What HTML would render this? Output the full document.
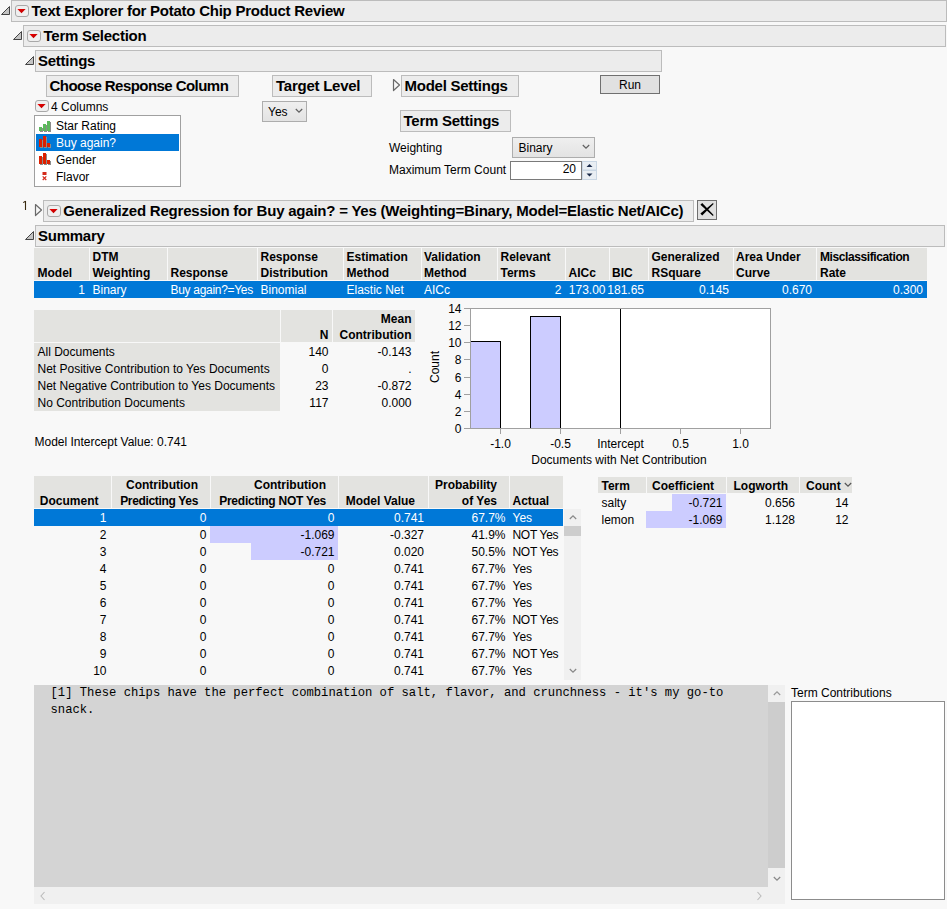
<!DOCTYPE html><html><head><meta charset="utf-8"><style>
html,body{margin:0;padding:0;}
body{width:947px;height:909px;background:#f8f8f8;position:relative;overflow:hidden;font-family:'Liberation Sans', sans-serif;}
.b{position:absolute;box-sizing:border-box;}
.t{position:absolute;white-space:pre;}
</style></head><body>
<div class="b" style="left:11px;top:0px;width:936px;height:22px;background:#ececec;border:1px solid #bcbcbc;"></div>
<svg class="b" style="left:0px;top:5px" width="11" height="11" viewBox="0 0 11 11"><path d="M1.5 9.5 L9.5 1.5 L9.5 9.5 Z" fill="#c4c4c4" stroke="#444" stroke-width="1" stroke-linejoin="round"/></svg>
<svg class="b" style="left:15px;top:5px" width="14" height="12" viewBox="0 0 14 12"><rect x="0.5" y="0.5" width="13" height="11" rx="2.5" fill="#efefef" stroke="#a8a8a8"/><defs><linearGradient id="rg15_5" x1="0" y1="0" x2="1" y2="1"><stop offset="0" stop-color="#f00000"/><stop offset="1" stop-color="#b00000"/></linearGradient></defs><path d="M2.4 4 L10.6 4 L6.5 8.3 Z" fill="url(#rg15_5)"/></svg>
<div class="t" style="top:1px;font:bold 15px/20px 'Liberation Sans', sans-serif;color:#000;letter-spacing:-0.25px;left:31.5px;">Text Explorer for Potato Chip Product Review</div>
<div class="b" style="left:23px;top:25px;width:923px;height:22px;background:#ececec;border:1px solid #bcbcbc;"></div>
<svg class="b" style="left:12px;top:30px" width="11" height="11" viewBox="0 0 11 11"><path d="M1.5 9.5 L9.5 1.5 L9.5 9.5 Z" fill="#c4c4c4" stroke="#444" stroke-width="1" stroke-linejoin="round"/></svg>
<svg class="b" style="left:27px;top:30px" width="14" height="12" viewBox="0 0 14 12"><rect x="0.5" y="0.5" width="13" height="11" rx="2.5" fill="#efefef" stroke="#a8a8a8"/><defs><linearGradient id="rg27_30" x1="0" y1="0" x2="1" y2="1"><stop offset="0" stop-color="#f00000"/><stop offset="1" stop-color="#b00000"/></linearGradient></defs><path d="M2.4 4 L10.6 4 L6.5 8.3 Z" fill="url(#rg27_30)"/></svg>
<div class="t" style="top:26px;font:bold 15px/20px 'Liberation Sans', sans-serif;color:#000;letter-spacing:-0.25px;left:43.5px;">Term Selection</div>
<div class="b" style="left:35px;top:50px;width:627px;height:22px;background:#ececec;border:1px solid #bcbcbc;"></div>
<svg class="b" style="left:24px;top:55px" width="11" height="11" viewBox="0 0 11 11"><path d="M1.5 9.5 L9.5 1.5 L9.5 9.5 Z" fill="#c4c4c4" stroke="#444" stroke-width="1" stroke-linejoin="round"/></svg>
<div class="t" style="top:51px;font:bold 15px/20px 'Liberation Sans', sans-serif;color:#000;letter-spacing:-0.25px;left:38px;">Settings</div>
<div class="b" style="left:46px;top:75px;width:193px;height:22px;background:#ececec;border:1px solid #bcbcbc;"></div>
<div class="t" style="top:76px;font:bold 15px/20px 'Liberation Sans', sans-serif;color:#000;letter-spacing:-0.55px;left:49.5px;">Choose Response Column</div>
<div class="b" style="left:272px;top:75px;width:100px;height:22px;background:#ececec;border:1px solid #bcbcbc;"></div>
<div class="t" style="top:76px;font:bold 15px/20px 'Liberation Sans', sans-serif;color:#000;letter-spacing:-0.25px;left:276px;">Target Level</div>
<div class="b" style="left:401px;top:75px;width:118px;height:22px;background:#ececec;border:1px solid #bcbcbc;"></div>
<svg class="b" style="left:392px;top:78px" width="9" height="14" viewBox="0 0 9 14"><path d="M1.5 1.5 L7.5 7 L1.5 12.5 Z" fill="#f8f8f8" stroke="#6a6a6a" stroke-width="1.2" stroke-linejoin="round"/></svg>
<div class="t" style="top:76px;font:bold 15px/20px 'Liberation Sans', sans-serif;color:#000;letter-spacing:-0.25px;left:404.5px;">Model Settings</div>
<div class="b" style="left:600px;top:75px;width:60px;height:19px;background:#e1e1e1;border:1px solid #707070;"></div>
<div class="t" style="top:75px;font:12px/20px 'Liberation Sans', sans-serif;color:#000;left:330px;width:600px;text-align:center;">Run</div>
<svg class="b" style="left:35px;top:100px" width="14" height="12" viewBox="0 0 14 12"><rect x="0.5" y="0.5" width="13" height="11" rx="2.5" fill="#efefef" stroke="#a8a8a8"/><defs><linearGradient id="rg35_100" x1="0" y1="0" x2="1" y2="1"><stop offset="0" stop-color="#f00000"/><stop offset="1" stop-color="#b00000"/></linearGradient></defs><path d="M2.4 4 L10.6 4 L6.5 8.3 Z" fill="url(#rg35_100)"/></svg>
<div class="t" style="top:97px;font:12px/20px 'Liberation Sans', sans-serif;color:#000;left:51px;">4 Columns</div>
<div class="b" style="left:34px;top:115px;width:147px;height:72px;background:#ffffff;border:1px solid #a0a0a0;"></div>
<div class="b" style="left:36px;top:134px;width:143px;height:17px;background:#0078d7;"></div>
<div class="b" style="left:40px;top:128px;width:3px;height:4px;background:#8c8c8c;"></div>
<div class="b" style="left:39px;top:127px;width:3px;height:4px;background:#5cb85c;"></div>
<div class="b" style="left:44px;top:125px;width:3px;height:7px;background:#8c8c8c;"></div>
<div class="b" style="left:43px;top:124px;width:3px;height:7px;background:#5cb85c;"></div>
<div class="b" style="left:48px;top:122px;width:3px;height:10px;background:#8c8c8c;"></div>
<div class="b" style="left:47px;top:121px;width:3px;height:10px;background:#5cb85c;"></div>
<div class="b" style="left:40px;top:140px;width:3px;height:8px;background:#8c8c8c;"></div>
<div class="b" style="left:39px;top:139px;width:3px;height:8px;background:#dd2000;"></div>
<div class="b" style="left:44px;top:137px;width:3px;height:11px;background:#8c8c8c;"></div>
<div class="b" style="left:43px;top:136px;width:3px;height:11px;background:#dd2000;"></div>
<div class="b" style="left:48px;top:144px;width:3px;height:4px;background:#8c8c8c;"></div>
<div class="b" style="left:47px;top:143px;width:3px;height:4px;background:#dd2000;"></div>
<div class="b" style="left:40px;top:157px;width:3px;height:8px;background:#8c8c8c;"></div>
<div class="b" style="left:39px;top:156px;width:3px;height:8px;background:#dd2000;"></div>
<div class="b" style="left:44px;top:154px;width:3px;height:11px;background:#8c8c8c;"></div>
<div class="b" style="left:43px;top:153px;width:3px;height:11px;background:#dd2000;"></div>
<div class="b" style="left:48px;top:161px;width:3px;height:4px;background:#8c8c8c;"></div>
<div class="b" style="left:47px;top:160px;width:3px;height:4px;background:#dd2000;"></div>
<svg class="b" style="left:42px;top:172px" width="5" height="9" viewBox="0 0 5 9"><rect x="0.5" y="0" width="4" height="3" fill="#d42a1a"/><path d="M0.7 4.3 L4.3 8 M4.3 4.3 L0.7 8" stroke="#d42a1a" stroke-width="1.2"/></svg>
<div class="t" style="top:116px;font:12px/20px 'Liberation Sans', sans-serif;color:#000;left:56px;">Star Rating</div>
<div class="t" style="top:133px;font:12px/20px 'Liberation Sans', sans-serif;color:#fff;left:56px;">Buy again?</div>
<div class="t" style="top:150px;font:12px/20px 'Liberation Sans', sans-serif;color:#000;left:56px;">Gender</div>
<div class="t" style="top:167px;font:12px/20px 'Liberation Sans', sans-serif;color:#000;left:56px;">Flavor</div>
<div class="b" style="left:262px;top:101px;width:45px;height:21px;background:linear-gradient(#efefef,#e3e3e3);border:1px solid #adadad;"></div>
<div class="t" style="top:102px;font:12px/20px 'Liberation Sans', sans-serif;color:#000;left:268px;">Yes</div>
<svg class="b" style="left:295px;top:108px" width="8" height="6" viewBox="0 0 8 6"><path d="M0.8 1 L4 4.2 L7.2 1" fill="none" stroke="#606060" stroke-width="1.2"/></svg>
<div class="b" style="left:400px;top:110px;width:111px;height:22px;background:#ececec;border:1px solid #bcbcbc;"></div>
<div class="t" style="top:111px;font:bold 15px/20px 'Liberation Sans', sans-serif;color:#000;letter-spacing:-0.25px;left:403.5px;">Term Settings</div>
<div class="t" style="top:138px;font:12px/20px 'Liberation Sans', sans-serif;color:#000;left:389px;">Weighting</div>
<div class="t" style="top:160px;font:12px/20px 'Liberation Sans', sans-serif;color:#000;left:389px;">Maximum Term Count</div>
<div class="b" style="left:512px;top:137px;width:83px;height:21px;background:linear-gradient(#efefef,#e3e3e3);border:1px solid #adadad;"></div>
<div class="t" style="top:138px;font:12px/20px 'Liberation Sans', sans-serif;color:#000;left:518.5px;">Binary</div>
<svg class="b" style="left:582px;top:144px" width="8" height="6" viewBox="0 0 8 6"><path d="M0.8 1 L4 4.2 L7.2 1" fill="none" stroke="#606060" stroke-width="1.2"/></svg>
<div class="b" style="left:510px;top:161px;width:72px;height:19px;background:#ffffff;border:1px solid #7a7a7a;"></div>
<div class="t" style="top:159px;font:12px/20px 'Liberation Sans', sans-serif;color:#000;left:-24px;width:600px;text-align:right;">20</div>
<svg class="b" style="left:582px;top:161px" width="15" height="19" viewBox="0 0 15 19"><rect x="0.5" y="0.5" width="14" height="8.5" fill="#e9eef3" stroke="#c9d6e3"/><rect x="0.5" y="9.5" width="14" height="9" fill="#e9eef3" stroke="#c9d6e3"/><path d="M4.5 6 L10.5 6 L7.5 3 Z" fill="#1a2a4a"/><path d="M4.5 12.5 L10.5 12.5 L7.5 15.5 Z" fill="#1a2a4a"/></svg>
<svg class="b" style="left:22px;top:200px" width="8" height="11" viewBox="0 0 8 11"><path d="M3.5 1 L3.5 10 M1.2 2.6 L3.5 1.2" fill="none" stroke="#3a2a10" stroke-width="1.1"/></svg>
<svg class="b" style="left:34px;top:203px" width="9" height="14" viewBox="0 0 9 14"><path d="M1.5 1.5 L7.5 7 L1.5 12.5 Z" fill="#f8f8f8" stroke="#6a6a6a" stroke-width="1.2" stroke-linejoin="round"/></svg>
<div class="b" style="left:43px;top:200px;width:651px;height:22px;background:#ececec;border:1px solid #bcbcbc;"></div>
<svg class="b" style="left:47px;top:205px" width="14" height="12" viewBox="0 0 14 12"><rect x="0.5" y="0.5" width="13" height="11" rx="2.5" fill="#efefef" stroke="#a8a8a8"/><defs><linearGradient id="rg47_205" x1="0" y1="0" x2="1" y2="1"><stop offset="0" stop-color="#f00000"/><stop offset="1" stop-color="#b00000"/></linearGradient></defs><path d="M2.4 4 L10.6 4 L6.5 8.3 Z" fill="url(#rg47_205)"/></svg>
<div class="t" style="top:201px;font:bold 15px/20px 'Liberation Sans', sans-serif;color:#000;letter-spacing:-0.22px;left:63.3px;">Generalized Regression for Buy again? = Yes (Weighting=Binary, Model=Elastic Net/AICc)</div>
<svg class="b" style="left:697px;top:200px" width="20" height="20" viewBox="0 0 20 20"><rect x="0.5" y="0.5" width="19" height="19" fill="#e0e0e0" stroke="#6e6e6e"/><path d="M3.4 4.7 L5.2 2.9 L16.6 15.1 L15.9 15.9 Z M16 3.1 L16.6 3.9 L5.2 15.5 L3.4 13.5 Z" fill="#000"/></svg>
<div class="b" style="left:35px;top:225px;width:910px;height:22px;background:#ececec;border:1px solid #bcbcbc;"></div>
<svg class="b" style="left:24px;top:230px" width="11" height="11" viewBox="0 0 11 11"><path d="M1.5 9.5 L9.5 1.5 L9.5 9.5 Z" fill="#c4c4c4" stroke="#444" stroke-width="1" stroke-linejoin="round"/></svg>
<div class="t" style="top:226px;font:bold 15px/20px 'Liberation Sans', sans-serif;color:#000;letter-spacing:-0.25px;left:38px;">Summary</div>
<div class="b" style="left:34px;top:248px;width:55px;height:32px;background:#e3e3e0;"></div>
<div class="b" style="left:90px;top:248px;width:77px;height:32px;background:#e3e3e0;"></div>
<div class="b" style="left:168px;top:248px;width:89px;height:32px;background:#e3e3e0;"></div>
<div class="b" style="left:258px;top:248px;width:85px;height:32px;background:#e3e3e0;"></div>
<div class="b" style="left:344px;top:248px;width:77px;height:32px;background:#e3e3e0;"></div>
<div class="b" style="left:422px;top:248px;width:75px;height:32px;background:#e3e3e0;"></div>
<div class="b" style="left:498px;top:248px;width:67px;height:32px;background:#e3e3e0;"></div>
<div class="b" style="left:566px;top:248px;width:43px;height:32px;background:#e3e3e0;"></div>
<div class="b" style="left:610px;top:248px;width:38px;height:32px;background:#e3e3e0;"></div>
<div class="b" style="left:649px;top:248px;width:84px;height:32px;background:#e3e3e0;"></div>
<div class="b" style="left:734px;top:248px;width:82px;height:32px;background:#e3e3e0;"></div>
<div class="b" style="left:817px;top:248px;width:110px;height:32px;background:#e3e3e0;"></div>
<div class="b" style="left:34px;top:281px;width:893px;height:17px;background:#0078d7;"></div>
<div class="t" style="top:263px;font:bold 12px/20px 'Liberation Sans', sans-serif;color:#000;left:37.5px;">Model</div>
<div class="t" style="top:247px;font:bold 12px/20px 'Liberation Sans', sans-serif;color:#000;left:92.5px;">DTM</div>
<div class="t" style="top:263px;font:bold 12px/20px 'Liberation Sans', sans-serif;color:#000;left:92.5px;">Weighting</div>
<div class="t" style="top:263px;font:bold 12px/20px 'Liberation Sans', sans-serif;color:#000;left:170.5px;">Response</div>
<div class="t" style="top:247px;font:bold 12px/20px 'Liberation Sans', sans-serif;color:#000;left:260.5px;">Response</div>
<div class="t" style="top:263px;font:bold 12px/20px 'Liberation Sans', sans-serif;color:#000;left:260.5px;">Distribution</div>
<div class="t" style="top:247px;font:bold 12px/20px 'Liberation Sans', sans-serif;color:#000;left:346.5px;">Estimation</div>
<div class="t" style="top:263px;font:bold 12px/20px 'Liberation Sans', sans-serif;color:#000;left:346.5px;">Method</div>
<div class="t" style="top:247px;font:bold 12px/20px 'Liberation Sans', sans-serif;color:#000;left:424px;">Validation</div>
<div class="t" style="top:263px;font:bold 12px/20px 'Liberation Sans', sans-serif;color:#000;left:424px;">Method</div>
<div class="t" style="top:247px;font:bold 12px/20px 'Liberation Sans', sans-serif;color:#000;left:500.5px;">Relevant</div>
<div class="t" style="top:263px;font:bold 12px/20px 'Liberation Sans', sans-serif;color:#000;left:500.5px;">Terms</div>
<div class="t" style="top:263px;font:bold 12px/20px 'Liberation Sans', sans-serif;color:#000;left:568.5px;">AICc</div>
<div class="t" style="top:263px;font:bold 12px/20px 'Liberation Sans', sans-serif;color:#000;left:612px;">BIC</div>
<div class="t" style="top:247px;font:bold 12px/20px 'Liberation Sans', sans-serif;color:#000;left:651.5px;">Generalized</div>
<div class="t" style="top:263px;font:bold 12px/20px 'Liberation Sans', sans-serif;color:#000;left:651.5px;">RSquare</div>
<div class="t" style="top:247px;font:bold 12px/20px 'Liberation Sans', sans-serif;color:#000;left:736px;">Area Under</div>
<div class="t" style="top:263px;font:bold 12px/20px 'Liberation Sans', sans-serif;color:#000;left:736px;">Curve</div>
<div class="t" style="top:247px;font:bold 12px/20px 'Liberation Sans', sans-serif;color:#000;letter-spacing:-0.4px;left:820px;">Misclassification</div>
<div class="t" style="top:263px;font:bold 12px/20px 'Liberation Sans', sans-serif;color:#000;left:820px;">Rate</div>
<div class="t" style="top:280px;font:12px/20px 'Liberation Sans', sans-serif;color:#fff;left:-515px;width:600px;text-align:right;">1</div>
<div class="t" style="top:280px;font:12px/20px 'Liberation Sans', sans-serif;color:#fff;left:92.5px;">Binary</div>
<div class="t" style="top:280px;font:12px/20px 'Liberation Sans', sans-serif;color:#fff;letter-spacing:-0.3px;left:170.5px;">Buy again?=Yes</div>
<div class="t" style="top:280px;font:12px/20px 'Liberation Sans', sans-serif;color:#fff;left:260.5px;">Binomial</div>
<div class="t" style="top:280px;font:12px/20px 'Liberation Sans', sans-serif;color:#fff;left:346.5px;">Elastic Net</div>
<div class="t" style="top:280px;font:12px/20px 'Liberation Sans', sans-serif;color:#fff;left:424px;">AICc</div>
<div class="t" style="top:280px;font:12px/20px 'Liberation Sans', sans-serif;color:#fff;left:-38.5px;width:600px;text-align:right;">2</div>
<div class="t" style="top:280px;font:12px/20px 'Liberation Sans', sans-serif;color:#fff;left:5.5px;width:600px;text-align:right;">173.00</div>
<div class="t" style="top:280px;font:12px/20px 'Liberation Sans', sans-serif;color:#fff;left:44px;width:600px;text-align:right;">181.65</div>
<div class="t" style="top:280px;font:12px/20px 'Liberation Sans', sans-serif;color:#fff;left:129px;width:600px;text-align:right;">0.145</div>
<div class="t" style="top:280px;font:12px/20px 'Liberation Sans', sans-serif;color:#fff;left:212px;width:600px;text-align:right;">0.670</div>
<div class="t" style="top:280px;font:12px/20px 'Liberation Sans', sans-serif;color:#fff;left:323px;width:600px;text-align:right;">0.300</div>
<div class="b" style="left:34px;top:310px;width:246px;height:32px;background:#e3e3e0;"></div>
<div class="b" style="left:281px;top:310px;width:51px;height:32px;background:#e3e3e0;"></div>
<div class="b" style="left:333px;top:310px;width:82px;height:32px;background:#e3e3e0;"></div>
<div class="b" style="left:34px;top:343px;width:246px;height:68px;background:#e3e3e0;"></div>
<div class="t" style="top:325px;font:bold 12px/20px 'Liberation Sans', sans-serif;color:#000;left:-271.5px;width:600px;text-align:right;">N</div>
<div class="t" style="top:309px;font:bold 12px/20px 'Liberation Sans', sans-serif;color:#000;left:-188.5px;width:600px;text-align:right;">Mean</div>
<div class="t" style="top:325px;font:bold 12px/20px 'Liberation Sans', sans-serif;color:#000;left:-188.5px;width:600px;text-align:right;">Contribution</div>
<div class="t" style="top:342px;font:12px/20px 'Liberation Sans', sans-serif;color:#000;left:37.5px;">All Documents</div>
<div class="t" style="top:342px;font:12px/20px 'Liberation Sans', sans-serif;color:#000;left:-271.5px;width:600px;text-align:right;">140</div>
<div class="t" style="top:342px;font:12px/20px 'Liberation Sans', sans-serif;color:#000;left:-188.5px;width:600px;text-align:right;">-0.143</div>
<div class="t" style="top:359px;font:12px/20px 'Liberation Sans', sans-serif;color:#000;left:37.5px;">Net Positive Contribution to Yes Documents</div>
<div class="t" style="top:359px;font:12px/20px 'Liberation Sans', sans-serif;color:#000;left:-271.5px;width:600px;text-align:right;">0</div>
<div class="t" style="top:359px;font:12px/20px 'Liberation Sans', sans-serif;color:#000;left:-188.5px;width:600px;text-align:right;">.</div>
<div class="t" style="top:376px;font:12px/20px 'Liberation Sans', sans-serif;color:#000;left:37.5px;">Net Negative Contribution to Yes Documents</div>
<div class="t" style="top:376px;font:12px/20px 'Liberation Sans', sans-serif;color:#000;left:-271.5px;width:600px;text-align:right;">23</div>
<div class="t" style="top:376px;font:12px/20px 'Liberation Sans', sans-serif;color:#000;left:-188.5px;width:600px;text-align:right;">-0.872</div>
<div class="t" style="top:393px;font:12px/20px 'Liberation Sans', sans-serif;color:#000;left:37.5px;">No Contribution Documents</div>
<div class="t" style="top:393px;font:12px/20px 'Liberation Sans', sans-serif;color:#000;left:-271.5px;width:600px;text-align:right;">117</div>
<div class="t" style="top:393px;font:12px/20px 'Liberation Sans', sans-serif;color:#000;left:-188.5px;width:600px;text-align:right;">0.000</div>
<div class="t" style="top:432px;font:12px/20px 'Liberation Sans', sans-serif;color:#000;left:34.5px;">Model Intercept Value: 0.741</div>
<svg class="b" style="left:420px;top:300px" width="360" height="170" viewBox="420 300 360 170" shape-rendering="crispEdges"><rect x="470.5" y="308.5" width="300" height="120" fill="#fff" stroke="#a0a0a0"/><rect x="470.5" y="341.5" width="30" height="87" fill="#ccccff" stroke="#000"/><rect x="530.5" y="316.5" width="30" height="112" fill="#ccccff" stroke="#000"/><rect x="470" y="308" width="1" height="121" fill="#a0a0a0"/><rect x="470" y="428" width="301" height="1" fill="#a0a0a0"/><rect x="620" y="309" width="1" height="119" fill="#000"/><rect x="464" y="428" width="6" height="1" fill="#a0a0a0"/><rect x="464" y="411" width="6" height="1" fill="#a0a0a0"/><rect x="464" y="394" width="6" height="1" fill="#a0a0a0"/><rect x="464" y="377" width="6" height="1" fill="#a0a0a0"/><rect x="464" y="359" width="6" height="1" fill="#a0a0a0"/><rect x="464" y="342" width="6" height="1" fill="#a0a0a0"/><rect x="464" y="325" width="6" height="1" fill="#a0a0a0"/><rect x="464" y="308" width="6" height="1" fill="#a0a0a0"/><rect x="500" y="429" width="1" height="5" fill="#a0a0a0"/><rect x="560" y="429" width="1" height="5" fill="#a0a0a0"/><rect x="620" y="429" width="1" height="5" fill="#a0a0a0"/><rect x="680" y="429" width="1" height="5" fill="#a0a0a0"/><rect x="740" y="429" width="1" height="5" fill="#a0a0a0"/></svg>
<div class="t" style="top:419px;font:12px/20px 'Liberation Sans', sans-serif;color:#000;left:-138.5px;width:600px;text-align:right;">0</div>
<div class="t" style="top:402px;font:12px/20px 'Liberation Sans', sans-serif;color:#000;left:-138.5px;width:600px;text-align:right;">2</div>
<div class="t" style="top:385px;font:12px/20px 'Liberation Sans', sans-serif;color:#000;left:-138.5px;width:600px;text-align:right;">4</div>
<div class="t" style="top:368px;font:12px/20px 'Liberation Sans', sans-serif;color:#000;left:-138.5px;width:600px;text-align:right;">6</div>
<div class="t" style="top:350px;font:12px/20px 'Liberation Sans', sans-serif;color:#000;left:-138.5px;width:600px;text-align:right;">8</div>
<div class="t" style="top:333px;font:12px/20px 'Liberation Sans', sans-serif;color:#000;left:-138.5px;width:600px;text-align:right;">10</div>
<div class="t" style="top:316px;font:12px/20px 'Liberation Sans', sans-serif;color:#000;left:-138.5px;width:600px;text-align:right;">12</div>
<div class="t" style="top:299px;font:12px/20px 'Liberation Sans', sans-serif;color:#000;left:-138.5px;width:600px;text-align:right;">14</div>
<div class="t" style="top:434px;font:12px/20px 'Liberation Sans', sans-serif;color:#000;left:200.5px;width:600px;text-align:center;">-1.0</div>
<div class="t" style="top:434px;font:12px/20px 'Liberation Sans', sans-serif;color:#000;left:260.5px;width:600px;text-align:center;">-0.5</div>
<div class="t" style="top:434px;font:12px/20px 'Liberation Sans', sans-serif;color:#000;left:320.5px;width:600px;text-align:center;">Intercept</div>
<div class="t" style="top:434px;font:12px/20px 'Liberation Sans', sans-serif;color:#000;left:380.5px;width:600px;text-align:center;">0.5</div>
<div class="t" style="top:434px;font:12px/20px 'Liberation Sans', sans-serif;color:#000;left:440.5px;width:600px;text-align:center;">1.0</div>
<div class="t" style="top:450px;font:12px/20px 'Liberation Sans', sans-serif;color:#000;left:319px;width:600px;text-align:center;">Documents with Net Contribution</div>
<div class="t" style="left:405px;top:357px;width:60px;text-align:center;font:12px/20px 'Liberation Sans', sans-serif;transform:rotate(-90deg);">Count</div>
<div class="b" style="left:34px;top:476px;width:77px;height:32px;background:#e3e3e0;"></div>
<div class="b" style="left:112px;top:476px;width:98px;height:32px;background:#e3e3e0;"></div>
<div class="b" style="left:211px;top:476px;width:127px;height:32px;background:#e3e3e0;"></div>
<div class="b" style="left:339px;top:476px;width:89px;height:32px;background:#e3e3e0;"></div>
<div class="b" style="left:429px;top:476px;width:80px;height:32px;background:#e3e3e0;"></div>
<div class="b" style="left:510px;top:476px;width:53px;height:32px;background:#e3e3e0;"></div>
<div class="t" style="top:491px;font:bold 12px/20px 'Liberation Sans', sans-serif;color:#000;left:-501.5px;width:600px;text-align:right;">Document</div>
<div class="t" style="top:475px;font:bold 12px/20px 'Liberation Sans', sans-serif;color:#000;left:-402px;width:600px;text-align:right;">Contribution</div>
<div class="t" style="top:491px;font:bold 12px/20px 'Liberation Sans', sans-serif;color:#000;letter-spacing:-0.33px;left:-402px;width:600px;text-align:right;">Predicting Yes</div>
<div class="t" style="top:475px;font:bold 12px/20px 'Liberation Sans', sans-serif;color:#000;left:-274px;width:600px;text-align:right;">Contribution</div>
<div class="t" style="top:491px;font:bold 12px/20px 'Liberation Sans', sans-serif;color:#000;letter-spacing:-0.24px;left:-274px;width:600px;text-align:right;">Predicting NOT Yes</div>
<div class="t" style="top:491px;font:bold 12px/20px 'Liberation Sans', sans-serif;color:#000;left:-185px;width:600px;text-align:right;">Model Value</div>
<div class="t" style="top:475px;font:bold 12px/20px 'Liberation Sans', sans-serif;color:#000;left:-103px;width:600px;text-align:right;">Probability</div>
<div class="t" style="top:491px;font:bold 12px/20px 'Liberation Sans', sans-serif;color:#000;left:-103px;width:600px;text-align:right;">of Yes</div>
<div class="t" style="top:491px;font:bold 12px/20px 'Liberation Sans', sans-serif;color:#000;left:512.5px;">Actual</div>
<div class="b" style="left:34px;top:509px;width:529px;height:17px;background:#0078d7;"></div>
<div class="b" style="left:210px;top:526px;width:128px;height:17px;background:#ccccff;"></div>
<div class="b" style="left:251px;top:543px;width:87px;height:17px;background:#ccccff;"></div>
<div class="t" style="top:508px;font:12px/20px 'Liberation Sans', sans-serif;color:#fff;left:-493.5px;width:600px;text-align:right;">1</div>
<div class="t" style="top:508px;font:12px/20px 'Liberation Sans', sans-serif;color:#fff;left:-393.5px;width:600px;text-align:right;">0</div>
<div class="t" style="top:508px;font:12px/20px 'Liberation Sans', sans-serif;color:#fff;left:-265.5px;width:600px;text-align:right;">0</div>
<div class="t" style="top:508px;font:12px/20px 'Liberation Sans', sans-serif;color:#fff;left:-176px;width:600px;text-align:right;">0.741</div>
<div class="t" style="top:508px;font:12px/20px 'Liberation Sans', sans-serif;color:#fff;left:-94.5px;width:600px;text-align:right;">67.7%</div>
<div class="t" style="top:508px;font:12px/20px 'Liberation Sans', sans-serif;color:#fff;left:512.5px;">Yes</div>
<div class="t" style="top:525px;font:12px/20px 'Liberation Sans', sans-serif;color:#000;left:-493.5px;width:600px;text-align:right;">2</div>
<div class="t" style="top:525px;font:12px/20px 'Liberation Sans', sans-serif;color:#000;left:-393.5px;width:600px;text-align:right;">0</div>
<div class="t" style="top:525px;font:12px/20px 'Liberation Sans', sans-serif;color:#000;left:-265.5px;width:600px;text-align:right;">-1.069</div>
<div class="t" style="top:525px;font:12px/20px 'Liberation Sans', sans-serif;color:#000;left:-176px;width:600px;text-align:right;">-0.327</div>
<div class="t" style="top:525px;font:12px/20px 'Liberation Sans', sans-serif;color:#000;left:-94.5px;width:600px;text-align:right;">41.9%</div>
<div class="t" style="top:525px;font:12px/20px 'Liberation Sans', sans-serif;color:#000;letter-spacing:-0.3px;left:512.5px;">NOT Yes</div>
<div class="t" style="top:542px;font:12px/20px 'Liberation Sans', sans-serif;color:#000;left:-493.5px;width:600px;text-align:right;">3</div>
<div class="t" style="top:542px;font:12px/20px 'Liberation Sans', sans-serif;color:#000;left:-393.5px;width:600px;text-align:right;">0</div>
<div class="t" style="top:542px;font:12px/20px 'Liberation Sans', sans-serif;color:#000;left:-265.5px;width:600px;text-align:right;">-0.721</div>
<div class="t" style="top:542px;font:12px/20px 'Liberation Sans', sans-serif;color:#000;left:-176px;width:600px;text-align:right;">0.020</div>
<div class="t" style="top:542px;font:12px/20px 'Liberation Sans', sans-serif;color:#000;left:-94.5px;width:600px;text-align:right;">50.5%</div>
<div class="t" style="top:542px;font:12px/20px 'Liberation Sans', sans-serif;color:#000;letter-spacing:-0.3px;left:512.5px;">NOT Yes</div>
<div class="t" style="top:559px;font:12px/20px 'Liberation Sans', sans-serif;color:#000;left:-493.5px;width:600px;text-align:right;">4</div>
<div class="t" style="top:559px;font:12px/20px 'Liberation Sans', sans-serif;color:#000;left:-393.5px;width:600px;text-align:right;">0</div>
<div class="t" style="top:559px;font:12px/20px 'Liberation Sans', sans-serif;color:#000;left:-265.5px;width:600px;text-align:right;">0</div>
<div class="t" style="top:559px;font:12px/20px 'Liberation Sans', sans-serif;color:#000;left:-176px;width:600px;text-align:right;">0.741</div>
<div class="t" style="top:559px;font:12px/20px 'Liberation Sans', sans-serif;color:#000;left:-94.5px;width:600px;text-align:right;">67.7%</div>
<div class="t" style="top:559px;font:12px/20px 'Liberation Sans', sans-serif;color:#000;left:512.5px;">Yes</div>
<div class="t" style="top:576px;font:12px/20px 'Liberation Sans', sans-serif;color:#000;left:-493.5px;width:600px;text-align:right;">5</div>
<div class="t" style="top:576px;font:12px/20px 'Liberation Sans', sans-serif;color:#000;left:-393.5px;width:600px;text-align:right;">0</div>
<div class="t" style="top:576px;font:12px/20px 'Liberation Sans', sans-serif;color:#000;left:-265.5px;width:600px;text-align:right;">0</div>
<div class="t" style="top:576px;font:12px/20px 'Liberation Sans', sans-serif;color:#000;left:-176px;width:600px;text-align:right;">0.741</div>
<div class="t" style="top:576px;font:12px/20px 'Liberation Sans', sans-serif;color:#000;left:-94.5px;width:600px;text-align:right;">67.7%</div>
<div class="t" style="top:576px;font:12px/20px 'Liberation Sans', sans-serif;color:#000;left:512.5px;">Yes</div>
<div class="t" style="top:593px;font:12px/20px 'Liberation Sans', sans-serif;color:#000;left:-493.5px;width:600px;text-align:right;">6</div>
<div class="t" style="top:593px;font:12px/20px 'Liberation Sans', sans-serif;color:#000;left:-393.5px;width:600px;text-align:right;">0</div>
<div class="t" style="top:593px;font:12px/20px 'Liberation Sans', sans-serif;color:#000;left:-265.5px;width:600px;text-align:right;">0</div>
<div class="t" style="top:593px;font:12px/20px 'Liberation Sans', sans-serif;color:#000;left:-176px;width:600px;text-align:right;">0.741</div>
<div class="t" style="top:593px;font:12px/20px 'Liberation Sans', sans-serif;color:#000;left:-94.5px;width:600px;text-align:right;">67.7%</div>
<div class="t" style="top:593px;font:12px/20px 'Liberation Sans', sans-serif;color:#000;left:512.5px;">Yes</div>
<div class="t" style="top:610px;font:12px/20px 'Liberation Sans', sans-serif;color:#000;left:-493.5px;width:600px;text-align:right;">7</div>
<div class="t" style="top:610px;font:12px/20px 'Liberation Sans', sans-serif;color:#000;left:-393.5px;width:600px;text-align:right;">0</div>
<div class="t" style="top:610px;font:12px/20px 'Liberation Sans', sans-serif;color:#000;left:-265.5px;width:600px;text-align:right;">0</div>
<div class="t" style="top:610px;font:12px/20px 'Liberation Sans', sans-serif;color:#000;left:-176px;width:600px;text-align:right;">0.741</div>
<div class="t" style="top:610px;font:12px/20px 'Liberation Sans', sans-serif;color:#000;left:-94.5px;width:600px;text-align:right;">67.7%</div>
<div class="t" style="top:610px;font:12px/20px 'Liberation Sans', sans-serif;color:#000;letter-spacing:-0.3px;left:512.5px;">NOT Yes</div>
<div class="t" style="top:627px;font:12px/20px 'Liberation Sans', sans-serif;color:#000;left:-493.5px;width:600px;text-align:right;">8</div>
<div class="t" style="top:627px;font:12px/20px 'Liberation Sans', sans-serif;color:#000;left:-393.5px;width:600px;text-align:right;">0</div>
<div class="t" style="top:627px;font:12px/20px 'Liberation Sans', sans-serif;color:#000;left:-265.5px;width:600px;text-align:right;">0</div>
<div class="t" style="top:627px;font:12px/20px 'Liberation Sans', sans-serif;color:#000;left:-176px;width:600px;text-align:right;">0.741</div>
<div class="t" style="top:627px;font:12px/20px 'Liberation Sans', sans-serif;color:#000;left:-94.5px;width:600px;text-align:right;">67.7%</div>
<div class="t" style="top:627px;font:12px/20px 'Liberation Sans', sans-serif;color:#000;left:512.5px;">Yes</div>
<div class="t" style="top:644px;font:12px/20px 'Liberation Sans', sans-serif;color:#000;left:-493.5px;width:600px;text-align:right;">9</div>
<div class="t" style="top:644px;font:12px/20px 'Liberation Sans', sans-serif;color:#000;left:-393.5px;width:600px;text-align:right;">0</div>
<div class="t" style="top:644px;font:12px/20px 'Liberation Sans', sans-serif;color:#000;left:-265.5px;width:600px;text-align:right;">0</div>
<div class="t" style="top:644px;font:12px/20px 'Liberation Sans', sans-serif;color:#000;left:-176px;width:600px;text-align:right;">0.741</div>
<div class="t" style="top:644px;font:12px/20px 'Liberation Sans', sans-serif;color:#000;left:-94.5px;width:600px;text-align:right;">67.7%</div>
<div class="t" style="top:644px;font:12px/20px 'Liberation Sans', sans-serif;color:#000;letter-spacing:-0.3px;left:512.5px;">NOT Yes</div>
<div class="t" style="top:661px;font:12px/20px 'Liberation Sans', sans-serif;color:#000;left:-493.5px;width:600px;text-align:right;">10</div>
<div class="t" style="top:661px;font:12px/20px 'Liberation Sans', sans-serif;color:#000;left:-393.5px;width:600px;text-align:right;">0</div>
<div class="t" style="top:661px;font:12px/20px 'Liberation Sans', sans-serif;color:#000;left:-265.5px;width:600px;text-align:right;">0</div>
<div class="t" style="top:661px;font:12px/20px 'Liberation Sans', sans-serif;color:#000;left:-176px;width:600px;text-align:right;">0.741</div>
<div class="t" style="top:661px;font:12px/20px 'Liberation Sans', sans-serif;color:#000;left:-94.5px;width:600px;text-align:right;">67.7%</div>
<div class="t" style="top:661px;font:12px/20px 'Liberation Sans', sans-serif;color:#000;left:512.5px;">Yes</div>
<div class="b" style="left:564px;top:509px;width:17px;height:171px;background:#f0f0f0;"></div>
<div class="b" style="left:564px;top:526px;width:17px;height:10px;background:#cdcdcd;"></div>
<svg class="b" style="left:569px;top:514px" width="8" height="6" viewBox="0 0 8 6"><path d="M0.8 5 L4 1.8 L7.2 5" fill="none" stroke="#888" stroke-width="1.2"/></svg>
<svg class="b" style="left:569px;top:668px" width="8" height="6" viewBox="0 0 8 6"><path d="M0.8 1 L4 4.2 L7.2 1" fill="none" stroke="#888" stroke-width="1.2"/></svg>
<div class="b" style="left:598px;top:477px;width:48px;height:16px;background:#e3e3e0;"></div>
<div class="b" style="left:647px;top:477px;width:79px;height:16px;background:#e3e3e0;"></div>
<div class="b" style="left:727px;top:477px;width:72px;height:16px;background:#e3e3e0;"></div>
<div class="b" style="left:800px;top:477px;width:52px;height:16px;background:#e3e3e0;"></div>
<div class="t" style="top:476px;font:bold 12px/20px 'Liberation Sans', sans-serif;color:#000;left:601.5px;">Term</div>
<div class="t" style="top:476px;font:bold 12px/20px 'Liberation Sans', sans-serif;color:#000;left:652px;">Coefficient</div>
<div class="t" style="top:476px;font:bold 12px/20px 'Liberation Sans', sans-serif;color:#000;left:733.5px;">Logworth</div>
<div class="t" style="top:476px;font:bold 12px/20px 'Liberation Sans', sans-serif;color:#000;left:806px;">Count</div>
<svg class="b" style="left:844px;top:482px" width="8" height="6" viewBox="0 0 8 6"><path d="M0.8 1 L4 4.2 L7.2 1" fill="none" stroke="#555" stroke-width="1.2"/></svg>
<div class="b" style="left:672px;top:494px;width:54px;height:17px;background:#ccccff;"></div>
<div class="b" style="left:646px;top:511px;width:80px;height:17px;background:#ccccff;"></div>
<div class="t" style="top:493px;font:12px/20px 'Liberation Sans', sans-serif;color:#000;left:601.5px;">salty</div>
<div class="t" style="top:493px;font:12px/20px 'Liberation Sans', sans-serif;color:#000;left:122.5px;width:600px;text-align:right;">-0.721</div>
<div class="t" style="top:493px;font:12px/20px 'Liberation Sans', sans-serif;color:#000;left:195px;width:600px;text-align:right;">0.656</div>
<div class="t" style="top:493px;font:12px/20px 'Liberation Sans', sans-serif;color:#000;left:248.5px;width:600px;text-align:right;">14</div>
<div class="t" style="top:510px;font:12px/20px 'Liberation Sans', sans-serif;color:#000;left:601.5px;">lemon</div>
<div class="t" style="top:510px;font:12px/20px 'Liberation Sans', sans-serif;color:#000;left:122.5px;width:600px;text-align:right;">-1.069</div>
<div class="t" style="top:510px;font:12px/20px 'Liberation Sans', sans-serif;color:#000;left:195px;width:600px;text-align:right;">1.128</div>
<div class="t" style="top:510px;font:12px/20px 'Liberation Sans', sans-serif;color:#000;left:248.5px;width:600px;text-align:right;">12</div>
<div class="b" style="left:34px;top:685px;width:734px;height:202px;background:#d4d4d4;"></div>
<div class="b" style="left:768px;top:685px;width:17px;height:219px;background:#f0f0f0;"></div>
<div class="b" style="left:768px;top:702px;width:17px;height:166px;background:#cdcdcd;"></div>
<div class="b" style="left:34px;top:887px;width:751px;height:17px;background:#f0f0f0;"></div>
<svg class="b" style="left:773px;top:690px" width="8" height="6" viewBox="0 0 8 6"><path d="M0.8 5 L4 1.8 L7.2 5" fill="none" stroke="#999" stroke-width="1.2"/></svg>
<svg class="b" style="left:773px;top:876px" width="8" height="6" viewBox="0 0 8 6"><path d="M0.8 1 L4 4.2 L7.2 1" fill="none" stroke="#888" stroke-width="1.2"/></svg>
<svg class="b" style="left:39px;top:891px" width="8" height="10" viewBox="0 0 8 10"><path d="M5.5 1 L2 5 L5.5 9" fill="none" stroke="#bbb" stroke-width="1.1"/></svg>
<svg class="b" style="left:755px;top:891px" width="8" height="10" viewBox="0 0 8 10"><path d="M2.5 1 L6 5 L2.5 9" fill="none" stroke="#bbb" stroke-width="1.1"/></svg>
<div class="t" style="top:683px;font:12.2px/20px 'Liberation Mono', monospace;color:#000;left:50.5px;">[1] These chips have the perfect combination of salt, flavor, and crunchness - it's my go-to</div>
<div class="t" style="top:700px;font:12.2px/20px 'Liberation Mono', monospace;color:#000;left:50.5px;">snack.</div>
<div class="t" style="top:683px;font:12px/20px 'Liberation Sans', sans-serif;color:#000;left:791px;">Term Contributions</div>
<div class="b" style="left:791px;top:701px;width:154px;height:199px;background:#ffffff;border:1px solid #8c8c8c;"></div>
</body></html>
